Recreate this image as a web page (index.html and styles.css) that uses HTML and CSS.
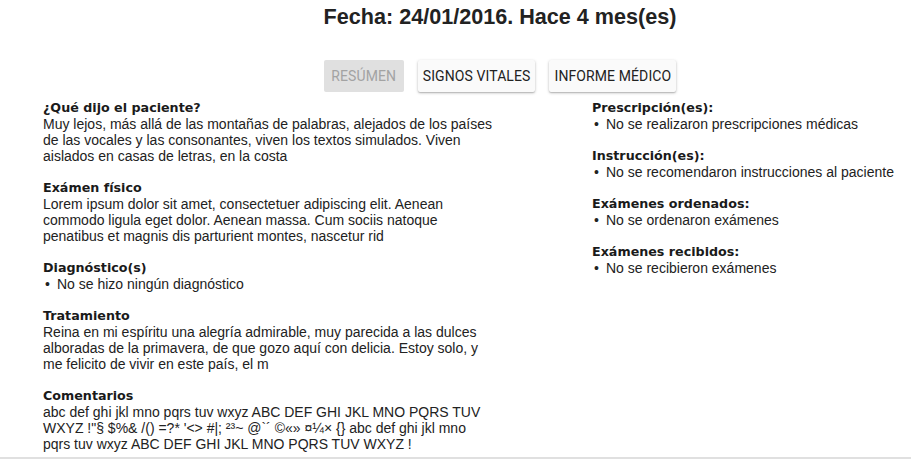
FILE: index.html
```html
<!DOCTYPE html>
<html lang="es">
<head>
<meta charset="utf-8">
<link rel="stylesheet" href="styles.css">
</head>
<body>
<div class="page">
  <header class="header">
    <h1 class="title">Fecha: 24/01/2016. Hace 4 mes(es)</h1>
    <nav class="tabs">
      <button class="tab tab-disabled" disabled>Resúmen</button>
      <button class="tab">Signos vitales</button>
      <button class="tab">Informe médico</button>
    </nav>
  </header>
  <main class="content">
    <section class="col col-left">
      <div class="block">
        <h2 class="label">¿Qué dijo el paciente?</h2>
        <p class="text">Muy lejos, más allá de las montañas de palabras, alejados de los países de las vocales y las consonantes, viven los textos simulados. Viven aislados en casas de letras, en la costa</p>
      </div>
      <div class="block">
        <h2 class="label">Exámen físico</h2>
        <p class="text">Lorem ipsum dolor sit amet, consectetuer adipiscing elit. Aenean commodo ligula eget dolor. Aenean massa. Cum sociis natoque penatibus et magnis dis parturient montes, nascetur rid</p>
      </div>
      <div class="block">
        <h2 class="label">Diagnóstico(s)</h2>
        <ul class="list"><li>No se hizo ningún diagnóstico</li></ul>
      </div>
      <div class="block">
        <h2 class="label">Tratamiento</h2>
        <p class="text">Reina en mi espíritu una alegría admirable, muy parecida a las dulces alboradas de la primavera, de que gozo aquí con delicia. Estoy solo, y me felicito de vivir en este país, el m</p>
      </div>
      <div class="block">
        <h2 class="label">Comentarios</h2>
        <p class="text">abc def ghi jkl mno pqrs tuv wxyz ABC DEF GHI JKL MNO PQRS TUV WXYZ !"§ $%&amp; /() =?* '&lt;&gt; #|; ²³~ @`´ ©«» ¤¼× {} abc def ghi jkl mno pqrs tuv wxyz ABC DEF GHI JKL MNO PQRS TUV WXYZ !</p>
      </div>
    </section>
    <section class="col col-right">
      <div class="block">
        <h2 class="label">Prescripción(es):</h2>
        <ul class="list"><li>No se realizaron prescripciones médicas</li></ul>
      </div>
      <div class="block">
        <h2 class="label">Instrucción(es):</h2>
        <ul class="list"><li>No se recomendaron instrucciones al paciente</li></ul>
      </div>
      <div class="block">
        <h2 class="label">Exámenes ordenados:</h2>
        <ul class="list"><li>No se ordenaron exámenes</li></ul>
      </div>
      <div class="block">
        <h2 class="label">Exámenes recibidos:</h2>
        <ul class="list"><li>No se recibieron exámenes</li></ul>
      </div>
    </section>
  </main>
</div>
</body>
</html>
```
FILE: styles.css
```css
* { box-sizing: border-box; }
html, body { margin: 0; padding: 0; background: #fff; }
body {
  font-family: "Liberation Sans", Arial, sans-serif;
  font-size: 14px;
  line-height: 16px;
  color: #222;
  overflow: hidden;
}
.page {
  height: 459px;
  border-bottom: 2px solid #e0e0e0;
}
.header {
  padding-left: 89px;
  display: flex;
  flex-direction: column;
  align-items: center;
}
.title {
  margin: 4px 0 0 0;
  font-family: "Liberation Sans", Arial, sans-serif;
  font-size: 21.6px;
  line-height: 26px;
  font-weight: bold;
  color: #222;
}
.tabs {
  display: flex;
  gap: 14px;
  margin-top: 30px;
}
.tab {
  font-family: Roboto, "Liberation Sans", sans-serif;
  font-size: 14px;
  letter-spacing: 0.1px;
  text-transform: uppercase;
  height: 32px;
  min-width: 80px;
  padding: 0 5px;
  border: 0;
  border-radius: 2px;
  background: #fafafa;
  color: #222;
  box-shadow: 0 1px 3px rgba(0,0,0,0.25), 0 1px 1px rgba(0,0,0,0.12);
}
.tab-disabled {
  background: #e0e0e0;
  color: #a3a3a3;
  box-shadow: none;
}
.content {
  display: flex;
  padding-left: 43px;
  margin-top: 8px;
}
.col-left { width: 452px; }
.col-right { margin-left: 97px; }
.block { margin-bottom: 16px; }
.label {
  margin: 0;
  font-family: "DejaVu Sans", Verdana, sans-serif;
  font-size: 12.7px;
  line-height: 16px;
  font-weight: bold;
  color: #1a1a1a;
}
.text { margin: 0; }
.list { margin: 0; padding: 0; list-style: none; }
.list li::before {
  content: "•";
  display: inline-block;
  width: 12px;
  padding-left: 2px;
}
```
